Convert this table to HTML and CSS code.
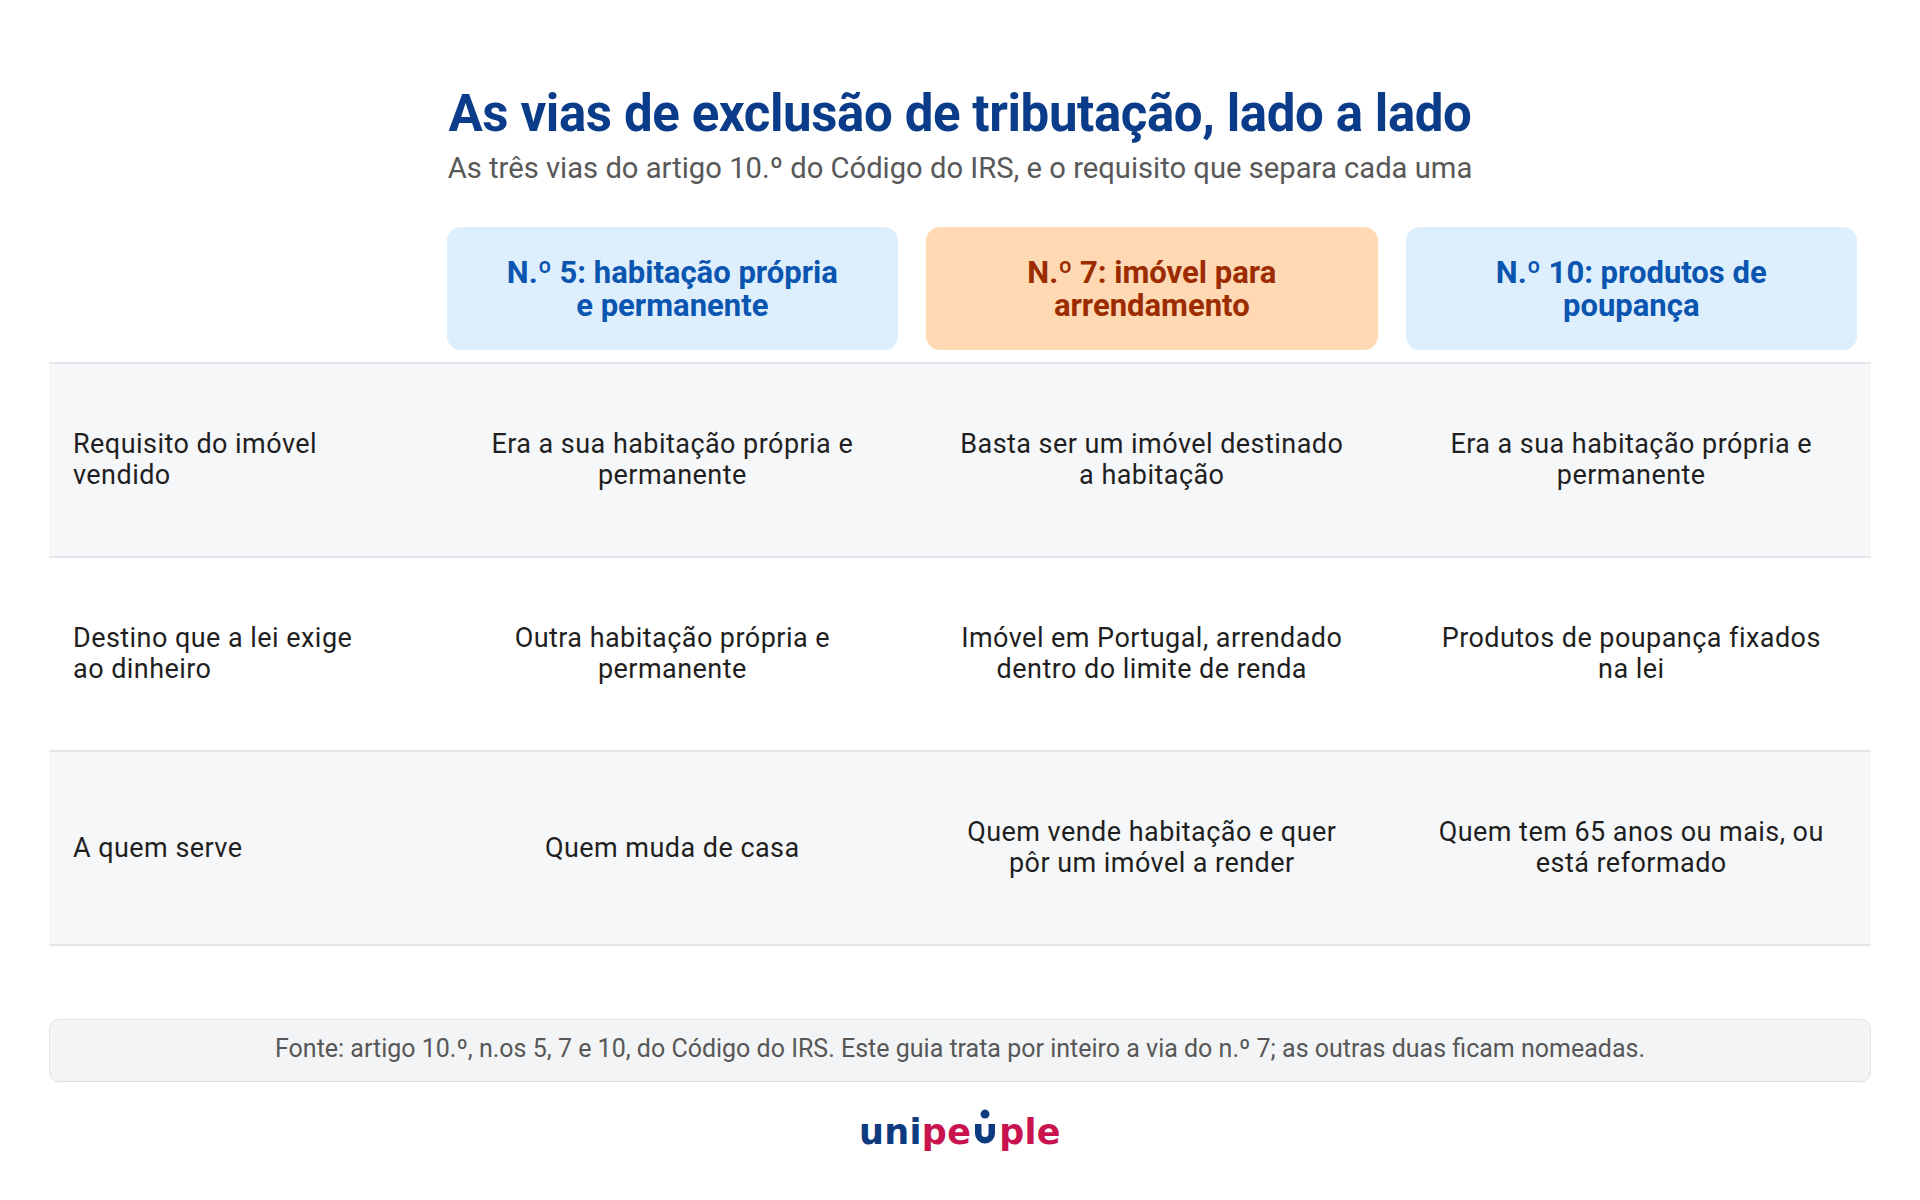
FILE: index.html
```html
<!DOCTYPE html>
<html lang="pt">
<head>
<meta charset="utf-8">
<title>As vias de exclusão de tributação, lado a lado</title>
<link rel="stylesheet" href="styles.css">
</head>
<body>
<div class="page">
  <header class="heading">
    <h1 class="title">As vias de exclusão de tributação, lado a lado</h1>
    <p class="subtitle">As três vias do artigo 10.º do Código do IRS, e o requisito que separa cada uma</p>
  </header>

  <div class="table">
    <div class="thead">
      <div class="corner"></div>
      <div class="hcell"><div class="card card-blue">N.º 5: habitação própria e permanente</div></div>
      <div class="hcell"><div class="card card-peach">N.º 7: imóvel para arrendamento</div></div>
      <div class="hcell"><div class="card card-blue">N.º 10: produtos de poupança</div></div>
    </div>
    <div class="tbody">
      <div class="row alt">
        <div class="label">Requisito do imóvel vendido</div>
        <div class="cell">Era a sua habitação própria e permanente</div>
        <div class="cell">Basta ser um imóvel destinado a habitação</div>
        <div class="cell">Era a sua habitação própria e permanente</div>
      </div>
      <div class="row">
        <div class="label">Destino que a lei exige ao dinheiro</div>
        <div class="cell">Outra habitação própria e permanente</div>
        <div class="cell">Imóvel em Portugal, arrendado dentro do limite de renda</div>
        <div class="cell">Produtos de poupança fixados na lei</div>
      </div>
      <div class="row alt">
        <div class="label">A quem serve</div>
        <div class="cell">Quem muda de casa</div>
        <div class="cell">Quem vende habitação e quer pôr um imóvel a render</div>
        <div class="cell">Quem tem 65 anos ou mais, ou está reformado</div>
      </div>
    </div>
  </div>

  <div class="note">Fonte: artigo 10.º, n.os 5, 7 e 10, do Código do IRS. Este guia trata por inteiro a via do n.º 7; as outras duas ficam nomeadas.</div>

  <div class="logo" aria-label="unipeople"><span class="logo-blue">uni</span><span class="logo-red">pe</span><svg class="logo-o" width="26" height="40" viewBox="0 0 22 34" aria-hidden="true"><circle cx="11" cy="6" r="3.8" fill="#0e3a80"/><path d="M5.25 14.4 V22.5 A5.75 5.75 0 0 0 16.75 22.5 V14.4" fill="none" stroke="#0e3a80" stroke-width="5.5"/></svg><span class="logo-red">ple</span></div>
</div>
</body>
</html>
```

FILE: styles.css
```css
html, body {
  margin: 0;
  padding: 0;
  background: #ffffff;
}

body {
  font-family: Roboto, "Liberation Sans", Arial, sans-serif;
  color: #1f1f1f;
}

.page {
  width: 1920px;
  box-sizing: border-box;
  padding: 83px 49px 0;
}

.heading {
  text-align: center;
}

.title {
  margin: 0;
  font-size: 51px;
  line-height: 62px;
  font-weight: 700;
  letter-spacing: -0.4px;
  color: #0b3c8a;
}

.subtitle {
  margin: 5px 0 0;
  font-size: 29.2px;
  line-height: 36px;
  color: #585858;
}

.table {
  margin-top: 41px;
}

.thead,
.row {
  display: grid;
  grid-template-columns: 0.8fr 1fr 1fr 1fr;
}

.thead {
  padding-bottom: 12px;
}

.hcell {
  padding: 0 14px;
}

.card {
  height: 123px;
  box-sizing: border-box;
  padding: 0 56px;
  border-radius: 14px;
  display: flex;
  align-items: center;
  justify-content: center;
  text-align: center;
  font-size: 31px;
  line-height: 33px;
  font-weight: 700;
}

.card-blue {
  background: #ddeefd;
  color: #0a55b0;
}

.card-peach {
  background: #fed9b3;
  color: #9c2c00;
}

.tbody {
  border-top: 2px solid #e3e6ea;
}

.row {
  height: 194px;
  box-sizing: border-box;
  border-bottom: 2px solid #e3e6ea;
  font-size: 27px;
  line-height: 31px;
  letter-spacing: 0.45px;
}

.row.alt {
  background: #f6f7f9;
}

.label,
.cell {
  display: flex;
  align-items: center;
}

.label {
  padding: 0 64px 0 24px;
  text-align: left;
}

.cell {
  padding: 0 42px;
  justify-content: center;
  text-align: center;
}

.note {
  margin-top: 73px;
  padding: 12px 24px 16px;
  border: 1px solid #dfe2e6;
  border-radius: 10px;
  background: #f3f4f6;
  text-align: center;
  font-size: 25px;
  line-height: 33px;
  color: #575757;
}

.logo {
  margin-top: 25px;
  text-align: center;
  font-family: "DejaVu Sans", Lato, sans-serif;
  font-weight: 700;
  font-size: 35px;
  line-height: 40px;
  letter-spacing: 0.3px;
}

.logo-blue {
  color: #0e3a80;
}

.logo-red {
  color: #c8134f;
}

.logo-o {
  display: inline-block;
  vertical-align: -3.5px;
  margin: 0 1px;
}
```
